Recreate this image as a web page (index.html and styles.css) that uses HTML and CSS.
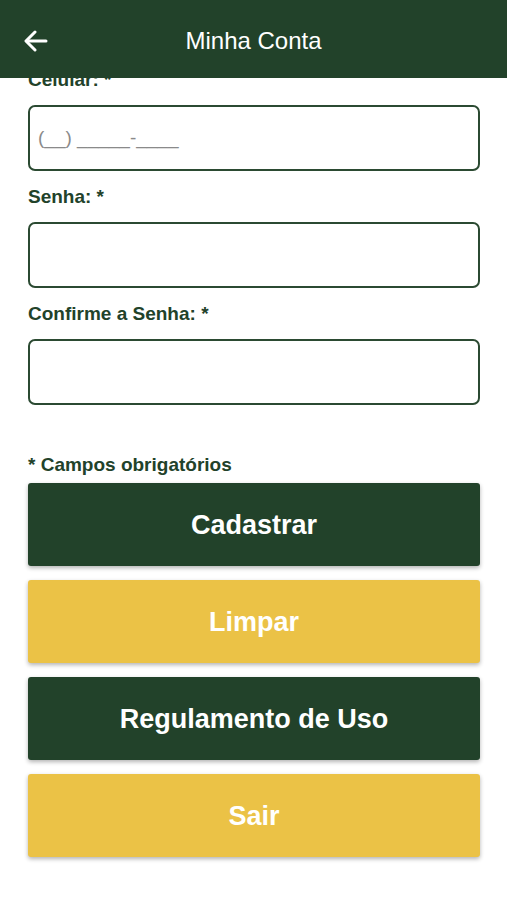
FILE: index.html
```html
<!DOCTYPE html>
<html lang="pt-BR">
<head>
<meta charset="UTF-8">
<meta name="viewport" content="width=device-width, initial-scale=1.0">
<title>Minha Conta</title>
<link rel="stylesheet" href="styles.css">
</head>
<body>
<header class="topbar">
    <button class="back" aria-label="Voltar">
        <svg width="24" height="22" viewBox="0 0 24 22" fill="none" stroke="#fff" stroke-width="3" stroke-linecap="round" stroke-linejoin="round">
            <path d="M22 11H3"/>
            <path d="M11 2L2 11l9 9"/>
        </svg>
    </button>
    <h1>Minha Conta</h1>
</header>

<main class="content">
    <div class="field">
        <label for="celular">Celular: *</label>
        <input id="celular" type="tel" placeholder="(__) _____-____">
    </div>
    <div class="field">
        <label for="senha">Senha: *</label>
        <input id="senha" type="password">
    </div>
    <div class="field">
        <label for="confirma">Confirme a Senha: *</label>
        <input id="confirma" type="password">
    </div>

    <p class="required">* Campos obrigatórios</p>

    <div class="actions">
        <button class="btn green">Cadastrar</button>
        <button class="btn yellow">Limpar</button>
        <button class="btn green">Regulamento de Uso</button>
        <button class="btn yellow">Sair</button>
    </div>
</main>
</body>
</html>
```

FILE: styles.css
```css
body, html {
  margin: 0;
  padding: 0;
  font-family: "Liberation Sans", Arial, sans-serif;
  background: #fff;
}
.topbar {
  position: fixed; /* content scrolls under it */
  top: 0;
  left: 0;
  right: 0;
  height: 78px;
  background-color: #22422a;
  display: flex;
  align-items: center;
  justify-content: center;
  z-index: 10;
}
.topbar h1 {
  margin: 4px 0 0;
  font-size: 24px;
  font-weight: normal;
  color: #fff;
}
.back {
  position: absolute;
  left: 24px;
  top: 30px;
  background: none;
  border: none;
  padding: 0;
  display: flex;
}
.content {
  padding: 70px 27px 40px 28px;
}
.field {
  display: flex;
  flex-direction: column;
  margin-bottom: 16px;
}
.field label {
  font-size: 19px;
  font-weight: bold;
  line-height: 20px;
  color: #22422a;
  margin-bottom: 15px;
}
.field input {
  height: 66px;
  box-sizing: border-box;
  border: 2px solid #2b4a32;
  border-radius: 7px;
  padding: 0 8px;
  font-family: inherit;
  font-size: 19px;
  color: #333;
  outline: none;
}
.field input::placeholder {
  color: #8a8a8a;
}
.required {
  margin: 50px 0 8px;
  font-size: 19px;
  font-weight: bold;
  line-height: 20px;
  color: #22422a;
}
.actions {
  display: flex;
  flex-direction: column;
  gap: 14px;
}
.btn {
  height: 83px;
  padding-top: 3px;
  border: none;
  border-radius: 3px;
  font-family: inherit;
  font-size: 27px;
  font-weight: bold;
  color: #fff;
  box-shadow: 0 2px 4px rgba(0, 0, 0, 0.3);
}
.green {
  background-color: #22422a;
}
.yellow {
  background-color: #ebc246;
}
```
